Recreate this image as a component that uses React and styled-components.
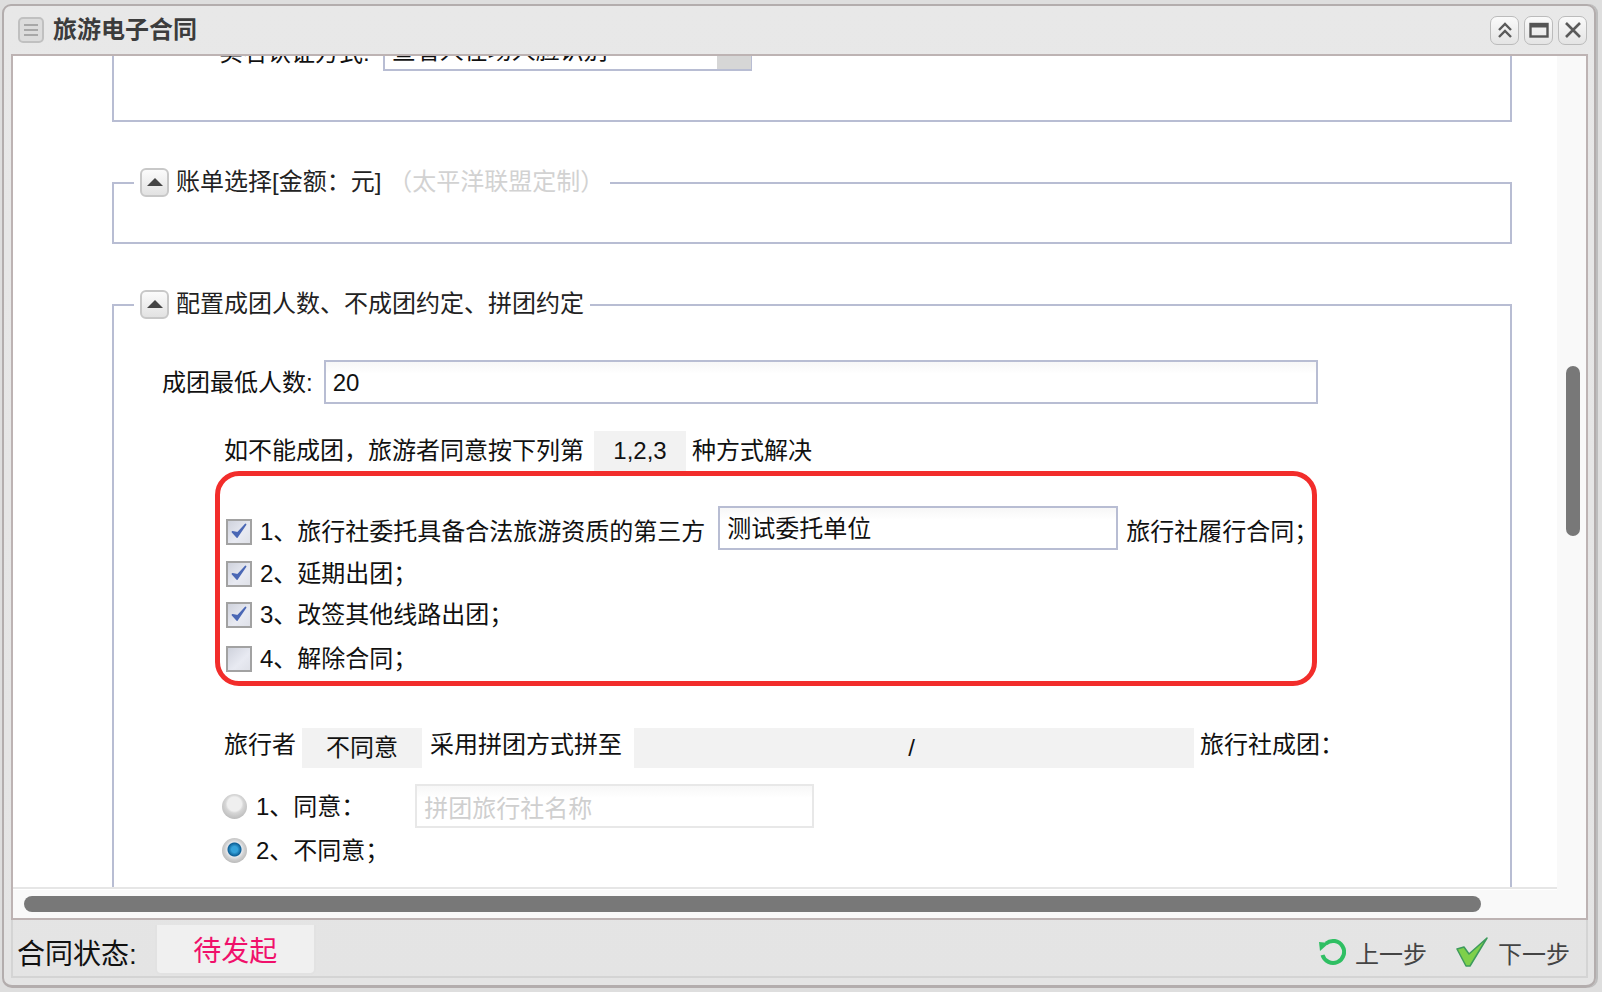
import React from 'react';
import styled, { createGlobalStyle } from 'styled-components';

// full-width CJK punctuation
const COMMA = '\uFF0C';
const SEMI = '\uFF1B';
const COLON = '\uFF1A';
const LP = '\uFF08';
const RP = '\uFF09';

const GlobalStyle = createGlobalStyle`
  html, body {
    margin: 0;
    padding: 0;
    width: 1602px;
    height: 992px;
    overflow: hidden;
    background: #dedede;
    font-family: "Liberation Sans", "Noto Sans CJK SC", sans-serif;
    color: #111;
  }
  * { box-sizing: border-box; }
`;

const Page = styled.div`
  width: 1602px;
  height: 992px;
  padding: 4px 6px 4px 2px;
`;

const Win = styled.div`
  width: 1594px;
  height: 984px;
  display: flex;
  flex-direction: column;
  background: linear-gradient(#e8e8e8, #e4e4e4);
  border: 2px solid #b3adad;
  border-bottom-width: 3px;
  border-radius: 9px 9px 10px 10px;
  box-shadow: 2px 0 0 #bdbdbd;
  padding: 0 6px 7px 7px;
`;

const TitleBar = styled.div`
  height: 48px;
  flex: none;
  display: flex;
  align-items: center;
  padding-left: 7px;
`;

const WinTitle = styled.div`
  margin: 0 0 6px 9px;
  font-family: "Noto Sans CJK SC", sans-serif;
  font-size: 24px;
  font-weight: 600;
  color: #3c3c3c;
  flex: 1;
`;

const WinBtns = styled.div`
  display: flex;
  gap: 5px;
  margin: 0 1px 0 0;
`;

const WinBtn = styled.div`
  width: 29px;
  height: 29px;
  border: 1.5px solid #bbb;
  border-radius: 7px;
  background: linear-gradient(#fafafa, #e4e4e4);
  display: flex;
  align-items: center;
  justify-content: center;
`;

const Viewport = styled.div`
  flex: 1;
  min-height: 0;
  position: relative;
  overflow: hidden;
  background: #fff;
  border: 2px solid #bdb3b3;
`;

const Content = styled.div`
  width: 1546px;
  height: 833px;
  overflow: hidden;
  border-right: 2px solid #e6e6e6;
  border-bottom: 2px solid #e6e6e6;
  padding-left: 99px;
`;

const Scrolled = styled.div`
  margin-top: -59px;
  width: 1400px;
`;

const Fieldset = styled.div`
  position: relative;
  border: 2px solid #b8bdd3;
  height: ${(p) => p.$h}px;
  margin-top: ${(p) => p.$mt || 0}px;
`;

const Legend = styled.div`
  position: absolute;
  left: 20px;
  top: -18px;
  height: 32px;
  display: flex;
  align-items: center;
  background: #fff;
  padding: 0 6px;
  font-size: 24px;
  line-height: 32px;
  white-space: nowrap;
  color: #222;
`;

const Toggle = styled.div`
  width: 29px;
  height: 29px;
  margin-right: 7px;
  border: 2px solid #c8c8c8;
  border-radius: 6px;
  background: linear-gradient(#fbfbfb, #e2e2e2);
  display: flex;
  align-items: center;
  justify-content: center;
  &::before {
    content: '';
    border-left: 8px solid transparent;
    border-right: 8px solid transparent;
    border-bottom: 8px solid #444;
  }
`;

const Muted = styled.span`
  color: #d2d2d2;
  margin-left: 7px;
`;

const SelectRow = styled.div`
  display: flex;
  margin: 0 0 0 105px;
  height: 71px;
  font-size: 24px;
  line-height: 34px;
`;

const SelectLabel = styled.div`
  margin-top: 37px;
`;

const SelectBox = styled.div`
  width: 369px;
  height: 40px;
  margin: 32px 0 0 13px;
  padding-left: 7px;
  border: 2px solid #b8bdd3;
  display: flex;
  justify-content: space-between;
  line-height: 36px;
`;

const SelectArrow = styled.div`
  width: 34px;
  background: #d6d6d6;
  margin-right: -1px;
`;

const Body = styled.div`
  padding: 54px 0 0 48px;
  font-size: 24px;
  position: relative;
`;

const CountRow = styled.div`
  display: flex;
  align-items: center;
  height: 44px;
`;

const TextInput = styled.div`
  height: 44px;
  width: ${(p) => p.$w}px;
  margin: ${(p) => p.$m || 0};
  border: 2px solid ${(p) => (p.$soft ? '#e8e8e8' : '#b8bdd3')};
  background: linear-gradient(#f7f7f7, #fff 30%);
  padding-left: 7px;
  line-height: ${(p) => (p.$soft ? 46 : 42)}px;
  color: ${(p) => (p.$soft ? '#cfcfcf' : '#111')};
  white-space: nowrap;
`;

const Group = styled.div`
  margin-left: 62px;
`;

const Line = styled.div`
  display: flex;
  align-items: center;
  white-space: nowrap;
  height: ${(p) => p.$h}px;
  margin-top: ${(p) => p.$mt || 0}px;
`;

// lifts a run of text inside its centred row, the fallback CJK font sits low
const Txt = styled.span`
  margin-bottom: ${(p) => p.$lift}px;
`;

const GreyValue = styled.div`
  width: ${(p) => p.$w}px;
  height: 40px;
  margin: 0 ${(p) => p.$mr}px 0 ${(p) => p.$ml}px;
  padding-right: ${(p) => p.$pr || 0}px;
  background: #f2f2f2;
  text-align: center;
  line-height: 40px;
`;

const RedBox = styled.div`
  position: absolute;
  left: -9px;
  top: 0;
  width: 1102px;
  height: 215px;
  border: 5px solid #f22d2b;
  border-radius: 24px;
  pointer-events: none;
`;

const Options = styled.div`
  position: relative;
  height: 215px;
  padding: 38px 0 0 2px;
`;

const CheckBox = styled.div`
  width: 26px;
  height: 26px;
  flex: none;
  margin-right: 8px;
  border: 2.5px solid #a2a2a2;
  background: linear-gradient(135deg, #cfd2dc, #e8eaf2 60%, #dfe1e8);
  display: flex;
  align-items: center;
  justify-content: center;
`;

const Radio = styled.div`
  width: 25px;
  height: 25px;
  flex: none;
  margin: 0 9px 0 -2px;
  border-radius: 50%;
  background: ${(p) => (p.$on
    ? 'radial-gradient(circle at 50% 46%, #35a2da 0 3px, #0d5f96 6.5px, #e6e8ec 7.5px, #cfcfcf 10px, #9e9e9e 100%)'
    : 'radial-gradient(circle at 50% 40%, #efefef 0 7px, #d6d6d6 9px, #a8a8a8 100%)')};
`;

const VScroll = styled.div`
  position: absolute;
  right: 6px;
  top: 310px;
  width: 14px;
  height: 170px;
  border-radius: 7px;
  background: #787878;
`;

const HScroll = styled.div`
  position: absolute;
  left: 11px;
  top: 840px;
  width: 1457px;
  height: 16px;
  border-radius: 8px;
  background: #787878;
`;

const Track = styled.div`
  position: absolute;
  right: 0;
  top: 0;
  bottom: 0;
  width: 29px;
  background: #f9f9f9;
`;

const HTrack = styled.div`
  position: absolute;
  left: 0;
  right: 0;
  bottom: 0;
  height: 28px;
  background: #f9f9f9;
`;

const Footer = styled.div`
  height: 58px;
  flex: none;
  display: flex;
  align-items: center;
  padding: 0 16px 0 4px;
  border-bottom: 2px solid #d4d4d4;
  border-right: 2px solid #d4d4d4;
  border-left: 2px solid #d4d4d4;
`;

const StatusLabel = styled.div`
  font-size: 28px;
  margin-top: 8px;
  color: #111;
`;

const StatusValue = styled.div`
  width: 161px;
  height: 50px;
  margin: 4px 0 0 18px;
  background: #f0f0f0;
  border: 2px solid #e2e2e2;
  border-top: none;
  border-radius: 0 0 6px 6px;
  text-align: center;
  font-size: 28px;
  line-height: 54px;
  color: #f0106b;
`;

const Spacer = styled.div`
  flex: 1;
`;

const StepBtn = styled.div`
  display: flex;
  align-items: center;
  margin-left: ${(p) => p.$ml}px;
  margin-top: 8px;
  font-size: 24px;
  color: #444;
  svg { margin-right: 9px; }
`;

const Check = () => (
  <svg width="18" height="20" viewBox="0 0 18 20">
    <path d="M2.5 10 L7 15 L15.5 2.5 L7.5 11 Z" fill="#4a67b5" stroke="#4a67b5" strokeWidth="1.8" strokeLinejoin="round" />
  </svg>
);

const options = [
  { id: 1, text: '1、旅行社委托具备合法旅游资质的第三方', on: true, h: 42, mt: 2 },
  { id: 2, text: `2、延期出团${SEMI}`, on: true, h: 26, mt: 8 },
  { id: 3, text: `3、改签其他线路出团${SEMI}`, on: true, h: 26, mt: 15 },
  { id: 4, text: `4、解除合同${SEMI}`, on: false, h: 26, mt: 18 },
];

export default function App() {
  return (
    <Page>
      <GlobalStyle />
      <Win>
        <TitleBar>
          <svg width="26" height="26" viewBox="0 0 26 26">
            <rect x="1" y="1" width="24" height="24" rx="4" fill="#dcdcdc" stroke="#c0c0c0" strokeWidth="2" />
            <path d="M6 8h14M6 13h14M6 18h14" stroke="#a8a8a8" strokeWidth="2" />
          </svg>
          <WinTitle>旅游电子合同</WinTitle>
          <WinBtns>
            <WinBtn>
              <svg width="18" height="18" viewBox="0 0 18 18" fill="none" stroke="#5a5a5a" strokeWidth="2.4">
                <path d="M3 9l6-6 6 6M3 16l6-6 6 6" />
              </svg>
            </WinBtn>
            <WinBtn>
              <svg width="20" height="16" viewBox="0 0 20 16" fill="none" stroke="#555">
                <rect x="1.5" y="2" width="17" height="12.5" strokeWidth="2.4" />
                <path d="M1.5 4h17" strokeWidth="3" />
              </svg>
            </WinBtn>
            <WinBtn>
              <svg width="18" height="18" viewBox="0 0 18 18" fill="none" stroke="#5a5a5a" strokeWidth="2.6">
                <path d="M2 2l14 14M16 2L2 16" />
              </svg>
            </WinBtn>
          </WinBtns>
        </TitleBar>
        <Viewport>
          <Track />
          <HTrack />
          <Content>
            <Scrolled>
              <Fieldset $h={125}>
                <SelectRow>
                  <SelectLabel>实名认证方式:</SelectLabel>
                  <SelectBox>
                    查看人在场人脸识别
                    <SelectArrow />
                  </SelectBox>
                </SelectRow>
              </Fieldset>
              <Fieldset $h={62} $mt={60}>
                <Legend>
                  <Toggle />
                  {`账单选择[金额${COLON}元]`}<Muted>{`${LP}太平洋联盟定制${RP}`}</Muted>
                </Legend>
              </Fieldset>
              <Fieldset $h={640} $mt={60}>
                <Legend>
                  <Toggle />
                  配置成团人数、不成团约定、拼团约定
                </Legend>
                <Body>
                  <CountRow>
                    <Txt $lift={4}>成团最低人数:</Txt>
                    <TextInput $w={994} $m="0 0 0 11px">20</TextInput>
                  </CountRow>
                  <Group>
                    <Line $h={40} $mt={27}>
                      <Txt $lift={6}>{`如不能成团${COMMA}旅游者同意按下列第`}</Txt>
                      <GreyValue $w={92} $ml={10} $mr={6}>1,2,3</GreyValue>
                      <Txt $lift={6}>种方式解决</Txt>
                    </Line>
                    <Options>
                      <RedBox />
                      {options.map((o) => (
                        <Line key={o.id} $h={o.h} $mt={o.mt}>
                          <CheckBox>{o.on && <Check />}</CheckBox>
                          <Txt $lift={6}>{o.text}</Txt>
                          {o.id === 1 && (
                            <>
                              <TextInput $w={400} $m="-8px 8px 0 13px">测试委托单位</TextInput>
                              <Txt $lift={6}>{`旅行社履行合同${SEMI}`}</Txt>
                            </>
                          )}
                        </Line>
                      ))}
                    </Options>
                    <Line $h={40} $mt={42}>
                      <Txt $lift={12}>旅行者</Txt>
                      <GreyValue $w={120} $ml={6} $mr={8}>不同意</GreyValue>
                      <Txt $lift={12}>采用拼团方式拼至</Txt>
                      <GreyValue $w={560} $ml={12} $mr={6} $pr={5}>/</GreyValue>
                      <Txt $lift={12}>{`旅行社成团${COLON}`}</Txt>
                    </Line>
                    <Line $h={44} $mt={16}>
                      <Radio />
                      <Txt $lift={4}>{`1、同意${COLON}`}</Txt>
                      <TextInput $soft $w={399} $m="0 0 0 50px">拼团旅行社名称</TextInput>
                    </Line>
                    <Line $h={25} $mt={10}>
                      <Radio $on />
                      <Txt $lift={4}>{`2、不同意${SEMI}`}</Txt>
                    </Line>
                  </Group>
                </Body>
              </Fieldset>
            </Scrolled>
          </Content>
          <VScroll />
          <HScroll />
        </Viewport>
        <Footer>
          <StatusLabel>合同状态:</StatusLabel>
          <StatusValue>待发起</StatusValue>
          <Spacer />
          <StepBtn $ml={0}>
            <svg width="28" height="28" viewBox="0 0 28 28" fill="none">
              <path d="M8 5.5A11 11 0 1 1 4.5 17" stroke="#2fbf63" strokeWidth="4" />
              <path d="M1 4l10 1-9 8z" fill="#2fbf63" />
            </svg>
            上一步
          </StepBtn>
          <StepBtn $ml={29}>
            <svg width="33" height="30" viewBox="0 0 33 30">
              <path d="M1 12l7-2 5 7L31 1 14 29h-4z" fill="#7ed04b" stroke="#3d9a5c" strokeWidth="1.5" strokeLinejoin="round" />
            </svg>
            下一步
          </StepBtn>
        </Footer>
      </Win>
    </Page>
  );
}
